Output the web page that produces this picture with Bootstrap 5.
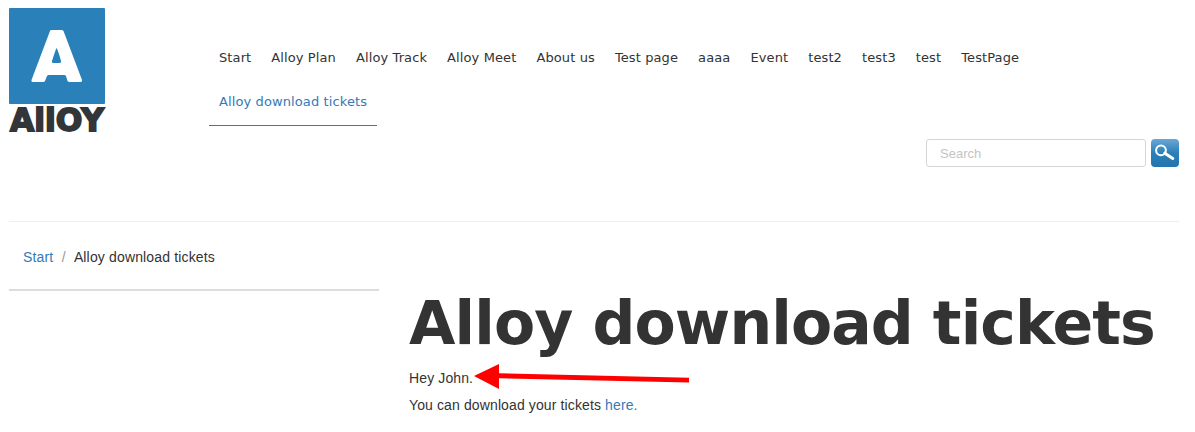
<!DOCTYPE html>
<html lang="en">
<head>
<meta charset="utf-8">
<meta name="viewport" content="width=device-width, initial-scale=1">
<title>Alloy download tickets</title>
<link rel="stylesheet" href="https://cdn.jsdelivr.net/npm/bootstrap@5.3.0/dist/css/bootstrap.min.css">
<style>
body{font:14px/20px "Liberation Sans",Arial,sans-serif;letter-spacing:.12px;color:#333;height:432px;overflow:hidden;background:#fff}
a{color:#337ab7;text-decoration:none}
.page-shell{width:1170px;margin-left:9px}
.site-header{height:222px;border-bottom:1px solid #eee}
.brand-mark{width:96px;margin:8px 104px 0 0}
.brand-mark svg{overflow:visible}
.main-menu{width:860px;margin-top:38px}
.main-menu .nav-link{font:13px/18px "DejaVu Sans",Verdana,sans-serif;letter-spacing:.11px;color:#333;padding:11px 10px 14px;height:44px;white-space:nowrap}
.main-menu .nav-link.active{color:#337ab7;border-bottom:1px solid #2a80b9}
.search-row{margin-top:5px;gap:5px}
.search-row .form-control{width:220px;height:28px;border:1px solid #d5d5d5;border-radius:3px;padding:3px 13px;font-size:13px;line-height:20px}
.search-row .form-control::placeholder{color:#c4c4c4;opacity:1}
.search-btn{width:28px;height:28px;border:0;border-radius:4px;background:linear-gradient(#6aa7d5,#2a80b9 50%,#2474ad)}
.crumbs{padding:25px 14px 0;height:67px}
.crumbs .breadcrumb{letter-spacing:.15px}
.crumbs .breadcrumb-item+.breadcrumb-item{padding-left:8.5px}
.crumbs .breadcrumb-item+.breadcrumb-item::before{padding-right:8px;color:#999}
.crumbs .breadcrumb-item.active{color:#333}
.side-rule{width:370px;border-top:2px solid #ddd;margin-right:30px}
.page-title{font:bold 60px/68px "DejaVu Sans",Verdana,sans-serif;letter-spacing:-.89px;white-space:nowrap;margin:0 0 11px}
.copy{margin-bottom:7px}
.pointer{left:65px;top:-4px}
</style>
<script src="https://cdn.jsdelivr.net/npm/bootstrap@5.3.0/dist/js/bootstrap.bundle.min.js"></script>
</head>
<body>
<div class="page-shell">
  <header class="site-header">
    <div class="d-flex align-items-start">
      <a href="#" class="brand-mark d-block" aria-label="Alloy">
        <svg class="d-block" width="96" height="126" viewBox="0 0 96 126">
          <rect width="96" height="96" rx="1" fill="#2a80b9"/>
          <path fill="#fff" fill-rule="evenodd" d="M41 23Q41 22 43 22H52Q54 22 54.500 23L73 72Q73.500 74 71.500 74H61Q59 74 58.500 73L57 68Q56.500 67 55 67H40Q38.500 67 38 68L36 73Q35.500 74 34 74H23.500Q22 74 22.500 72ZM47.500 40Q46.500 42 43 53Q42.500 55 44 55H50.500Q52.500 55 52 53Q49 42 47.500 40Z"/>
          <g fill="#333638" stroke="#333638" stroke-width="1.800" font-family="DejaVu Sans,sans-serif" font-weight="bold" font-size="31.500" letter-spacing="0">
            <text x="1" y="123" textLength="94" lengthAdjust="spacingAndGlyphs">AllOY</text>
          </g>
        </svg>
      </a>
      <ul class="main-menu nav">
        <li class="nav-item"><a class="nav-link" href="#">Start</a></li>
        <li class="nav-item"><a class="nav-link" href="#">Alloy Plan</a></li>
        <li class="nav-item"><a class="nav-link" href="#">Alloy Track</a></li>
        <li class="nav-item"><a class="nav-link" href="#">Alloy Meet</a></li>
        <li class="nav-item"><a class="nav-link" href="#">About us</a></li>
        <li class="nav-item"><a class="nav-link" href="#">Test page</a></li>
        <li class="nav-item"><a class="nav-link" href="#">aaaa</a></li>
        <li class="nav-item"><a class="nav-link" href="#">Event</a></li>
        <li class="nav-item"><a class="nav-link" href="#">test2</a></li>
        <li class="nav-item"><a class="nav-link" href="#">test3</a></li>
        <li class="nav-item"><a class="nav-link" href="#">test</a></li>
        <li class="nav-item"><a class="nav-link" href="#">TestPage</a></li>
        <li class="nav-item"><a class="nav-link active" href="#">Alloy download tickets</a></li>
      </ul>
    </div>
    <form class="search-row d-flex justify-content-end">
      <input class="form-control" type="text" placeholder="Search">
      <button class="search-btn p-0" type="button" aria-label="Search">
        <svg class="d-block" width="28" height="28" viewBox="0 0 28 28" fill="none" stroke="#fff"><circle cx="10" cy="11.300" r="4.900" stroke-width="2"/><path d="M13.800 14.200L21.800 19.500" stroke-width="3" stroke-linecap="round"/></svg>
      </button>
    </form>
  </header>
  <nav class="crumbs"><ol class="breadcrumb mb-0">
    <li class="breadcrumb-item"><a href="#">Start</a></li>
    <li class="breadcrumb-item active">Alloy download tickets</li>
  </ol></nav>
  <main class="d-flex">
    <aside class="side-rule flex-shrink-0"></aside>
    <section>
      <h1 class="page-title">Alloy download tickets</h1>
      <div class="position-relative">
        <p class="copy">Hey John.</p>
        <svg class="pointer position-absolute" width="217" height="26" viewBox="0 0 217 26" fill="red"><path d="M0 12L25 0V9.200L215 13.700V18.500L25 14.300V25Z"/></svg>
      </div>
      <p class="copy">You can download your tickets <a href="#">here.</a></p>
    </section>
  </main>
</div>
</body>
</html>
